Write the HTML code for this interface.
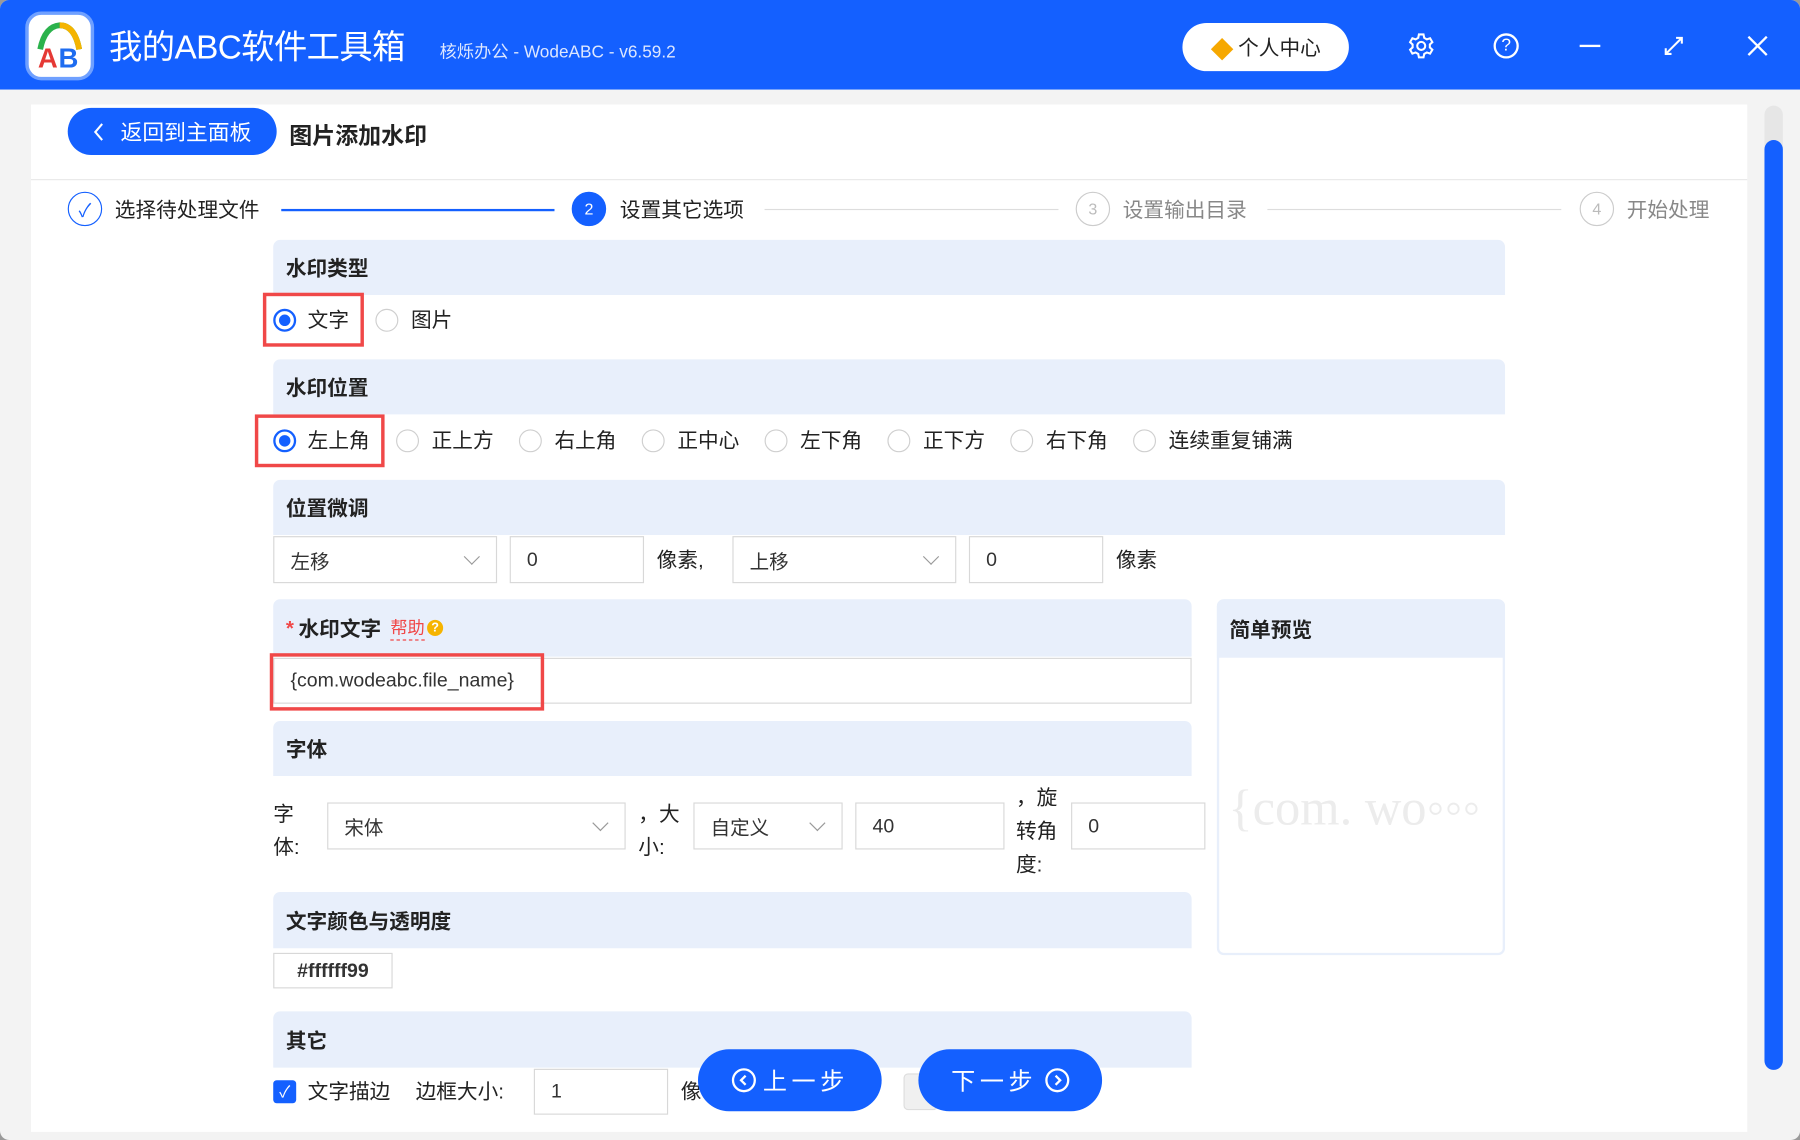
<!DOCTYPE html>
<html><head><meta charset="utf-8"><style>
*{box-sizing:border-box;margin:0;padding:0}
html,body{width:1800px;height:1140px;overflow:hidden;background:#9a9a9a}
#s{position:absolute;left:0;top:0;width:1568px;height:993px;transform:scale(1.148);transform-origin:0 0;background:#f3f3f3;font-family:"Liberation Sans","Noto Sans CJK SC",sans-serif;color:#222;font-size:18px;border-radius:8px;overflow:hidden}
.a{position:absolute}
.band{position:absolute;background:#e8effb;border-radius:6px 6px 0 0;font-weight:bold;font-size:18px;padding-left:11px;display:flex;align-items:center}
.rad{position:absolute;width:20px;height:20px;border:1px solid #cfcfcf;border-radius:50%;background:#fff}
.rad.on{border:2px solid #1460ff}
.rad.on::after{content:"";position:absolute;left:3px;top:3px;width:10px;height:10px;border-radius:50%;background:#1460ff}
.lbl{position:absolute;font-size:18px;line-height:20px}
.inp{position:absolute;border:1px solid #d8d8d8;background:#fff;font-size:17px;display:flex;align-items:center;padding-left:14px;color:#333}
.sel::after{content:"";position:absolute;right:16px;top:12px;width:9px;height:9px;border-right:1.5px solid #999;border-bottom:1.5px solid #999;transform:rotate(45deg)}
.red{position:absolute;border:3px solid #f04848}
.btn{position:absolute;background:#1460ff;color:#fff;border-radius:28px;font-size:21px;display:flex;align-items:center;justify-content:center;gap:6px;letter-spacing:4px}
.step{position:absolute;width:30px;height:30px;border-radius:50%;border:1px solid #ccc;color:#bbb;font-size:14px;display:flex;align-items:center;justify-content:center}
</style></head><body><div id="s">
<div class="a" style="left:0;top:0;width:1568px;height:78px;background:#1460ff"></div>
<div class="a" style="left:22px;top:10px;width:60px;height:60px;border-radius:14px;background:#fff;border:3px solid #6fa0ff">
<svg width="54" height="54" viewBox="0 0 54 54"><path d="M10 30 Q14 10 27 9 Q40 9 44 30" fill="none" stroke="#2bb24c" stroke-width="5"/><path d="M27 9 Q40 9 44 30" fill="none" stroke="#f5b400" stroke-width="5"/><text x="8" y="46" font-size="24" font-weight="bold" fill="#e53935" font-family="Liberation Sans">A</text><text x="26" y="46" font-size="24" font-weight="bold" fill="#1e6cf0" font-family="Liberation Sans">B</text></svg></div>
<div class="a" style="left:95px;top:22px;font-size:29px;color:#fff;line-height:40px;letter-spacing:-0.5px">我的ABC软件工具箱</div>
<div class="a" style="left:383px;top:34px;font-size:15px;color:#dde7ff">核烁办公 - WodeABC - v6.59.2</div>
<div class="a" style="left:1030px;top:20px;width:145px;height:42px;border-radius:21px;background:#fff;display:flex;align-items:center;justify-content:center;gap:4px;font-size:18px"><span style="color:#f6a800;font-size:20px">◆</span>个人中心</div>
<svg class="a" style="left:1226px;top:28px" width="24" height="24" viewBox="0 0 24 24" fill="none" stroke="#fff" stroke-width="1.8"><path d="M10 2h4l.6 3 2.3 1.3 2.8-1 2 3.4-2.2 2v2.6l2.2 2-2 3.4-2.8-1-2.3 1.3-.6 3h-4l-.6-3-2.3-1.3-2.8 1-2-3.4 2.2-2v-2.6l-2.2-2 2-3.4 2.8 1L9.4 5z"/><circle cx="12" cy="12" r="3.5"/></svg>
<div class="a" style="left:1301px;top:29px;width:22px;height:22px;border:2px solid #fff;border-radius:50%;color:#fff;font-size:15px;text-align:center;line-height:18px">?</div>
<div class="a" style="left:1376px;top:39px;width:18px;height:2px;background:#fff"></div>
<svg class="a" style="left:1449px;top:31px" width="18" height="18" viewBox="0 0 18 18" stroke="#fff" stroke-width="1.8" fill="none"><path d="M2 16L16 2M11 2h5v5M2 11v5h5"/></svg>
<svg class="a" style="left:1522px;top:31px" width="18" height="18" viewBox="0 0 18 18" stroke="#fff" stroke-width="2"><path d="M1 1L17 17M17 1L1 17"/></svg>
<div class="a" style="left:27px;top:91px;width:1495px;height:895px;background:#fff"></div>
<div class="a" style="left:1537px;top:92px;width:16px;height:840px;border-radius:8px;background:#e6e6e6"></div>
<div class="a" style="left:1537px;top:122px;width:16px;height:810px;border-radius:8px;background:#1460ff"></div>
<div class="btn" style="left:59px;top:94px;width:182px;height:41px;font-size:19px;letter-spacing:0;gap:14px"><svg width="10" height="16" viewBox="0 0 10 16" stroke="#fff" stroke-width="1.8" fill="none"><path d="M8 1L2 8l6 7"/></svg>返回到主面板</div>
<div class="a" style="left:252px;top:102px;font-size:20px;font-weight:bold">图片添加水印</div>
<div class="a" style="left:27px;top:156px;width:1495px;height:1px;background:#e8e8e8"></div>
<div class="step" style="left:59px;top:167px;border-color:#1460ff;color:#1460ff;font-size:16px">✓</div>
<div class="lbl" style="left:100px;top:173px">选择待处理文件</div>
<div class="a" style="left:245px;top:182px;width:238px;height:1.5px;background:#1460ff"></div>
<div class="step" style="left:498px;top:167px;background:#1460ff;border-color:#1460ff;color:#fff">2</div>
<div class="lbl" style="left:540px;top:173px">设置其它选项</div>
<div class="a" style="left:666px;top:182px;width:256px;height:1px;background:#ddd"></div>
<div class="step" style="left:937px;top:167px">3</div>
<div class="lbl" style="left:978px;top:173px;color:#888">设置输出目录</div>
<div class="a" style="left:1104px;top:182px;width:256px;height:1px;background:#ddd"></div>
<div class="step" style="left:1376px;top:167px">4</div>
<div class="lbl" style="left:1417px;top:173px;color:#888">开始处理</div>

<div class="band" style="left:238px;top:209px;width:1073px;height:48px">水印类型</div>
<div class="rad on" style="left:238px;top:269px"></div><div class="lbl" style="left:268px;top:269px">文字</div>
<div class="rad" style="left:327px;top:269px"></div><div class="lbl" style="left:358px;top:269px">图片</div>
<div class="red" style="left:229px;top:255px;width:88px;height:47px"></div>

<div class="band" style="left:238px;top:313px;width:1073px;height:48px">水印位置</div>
<div class="rad on" style="left:238px;top:374px"></div><div class="lbl" style="left:268px;top:374px">左上角</div>
<div class="rad" style="left:345px;top:374px"></div><div class="lbl" style="left:376px;top:374px">正上方</div>
<div class="rad" style="left:452px;top:374px"></div><div class="lbl" style="left:483px;top:374px">右上角</div>
<div class="rad" style="left:559px;top:374px"></div><div class="lbl" style="left:590px;top:374px">正中心</div>
<div class="rad" style="left:666px;top:374px"></div><div class="lbl" style="left:697px;top:374px">左下角</div>
<div class="rad" style="left:773px;top:374px"></div><div class="lbl" style="left:804px;top:374px">正下方</div>
<div class="rad" style="left:880px;top:374px"></div><div class="lbl" style="left:911px;top:374px">右下角</div>
<div class="rad" style="left:987px;top:374px"></div><div class="lbl" style="left:1018px;top:374px">连续重复铺满</div>
<div class="red" style="left:222px;top:361px;width:113px;height:46px"></div>

<div class="band" style="left:238px;top:418px;width:1073px;height:48px">位置微调</div>
<div class="inp sel" style="left:238px;top:467px;width:195px;height:41px">左移</div>
<div class="inp" style="left:444px;top:467px;width:117px;height:41px">0</div>
<div class="lbl" style="left:572px;top:478px">像素,</div>
<div class="inp sel" style="left:638px;top:467px;width:195px;height:41px">上移</div>
<div class="inp" style="left:844px;top:467px;width:117px;height:41px">0</div>
<div class="lbl" style="left:972px;top:478px">像素</div>

<div class="band" style="left:238px;top:522px;width:800px;height:50px"><span style="color:#f04848;margin-right:4px">*</span>水印文字<span style="color:#f04848;font-weight:normal;font-size:15px;margin-left:8px;border-bottom:1px dashed #f04848">帮助</span><span style="display:inline-block;width:14px;height:14px;border-radius:50%;background:#f6b400;color:#fff;font-size:11px;text-align:center;line-height:14px;margin-left:2px">?</span></div>
<div class="inp" style="left:238px;top:573px;width:800px;height:40px">{com.wodeabc.file_name}</div>
<div class="red" style="left:235px;top:569px;width:239px;height:50px"></div>

<div class="a" style="left:1060px;top:522px;width:251px;height:310px;border:2px solid #e8effb;border-radius:6px"></div>
<div class="band" style="left:1060px;top:522px;width:251px;height:51px">简单预览</div>
<div class="a" style="left:1070px;top:678px;font-family:'Liberation Serif',serif;font-size:44px;color:#ececec">{com. wo◦◦◦</div>

<div class="band" style="left:238px;top:628px;width:800px;height:48px">字体</div>
<div class="lbl" style="left:238px;top:695px;line-height:29px">字<br>体:</div>
<div class="inp sel" style="left:285px;top:699px;width:260px;height:41px">宋体</div>
<div class="lbl" style="left:556px;top:695px;line-height:29px">，大<br>小:</div>
<div class="inp sel" style="left:604px;top:699px;width:130px;height:41px">自定义</div>
<div class="inp" style="left:745px;top:699px;width:130px;height:41px">40</div>
<div class="lbl" style="left:885px;top:681px;line-height:29px">，旋<br>转角<br>度:</div>
<div class="inp" style="left:933px;top:699px;width:117px;height:41px">0</div>

<div class="band" style="left:238px;top:777px;width:800px;height:49px">文字颜色与透明度</div>
<div class="inp" style="left:238px;top:830px;width:104px;height:31px;justify-content:center;padding:0;font-weight:bold">#ffffff99</div>

<div class="band" style="left:238px;top:881px;width:800px;height:49px">其它</div>
<div class="a" style="left:238px;top:941px;width:20px;height:20px;border-radius:3px;background:#1460ff;color:#fff;font-size:14px;text-align:center;line-height:20px">✓</div>
<div class="lbl" style="left:268px;top:941px">文字描边</div>
<div class="lbl" style="left:362px;top:941px">边框大小:</div>
<div class="inp" style="left:465px;top:931px;width:117px;height:40px">1</div>
<div class="lbl" style="left:593px;top:941px">像</div>
<div class="a" style="left:787px;top:935px;width:30px;height:32px;background:#f0f0f0;border:1px solid #ddd;border-radius:4px"></div>
<div class="btn" style="left:608px;top:914px;width:160px;height:54px"><svg width="22" height="22" viewBox="0 0 22 22" fill="none" stroke="#fff" stroke-width="2"><circle cx="11" cy="11" r="9.5"/><path d="M12.5 7l-4 4 4 4"/></svg>上一步</div>
<div class="btn" style="left:800px;top:914px;width:160px;height:54px">下一步<svg width="22" height="22" viewBox="0 0 22 22" fill="none" stroke="#fff" stroke-width="2"><circle cx="11" cy="11" r="9.5"/><path d="M9.5 7l4 4-4 4"/></svg></div>
</div></body></html>
